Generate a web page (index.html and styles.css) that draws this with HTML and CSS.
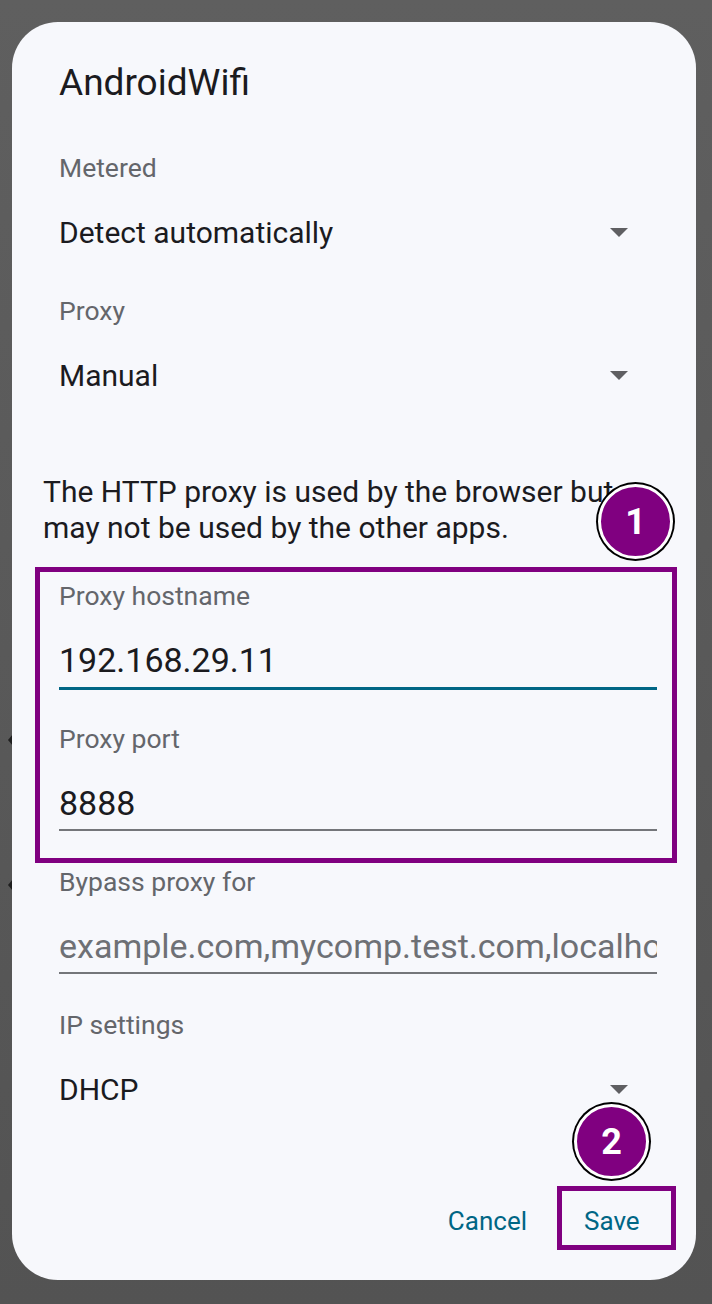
FILE: index.html
```html
<!DOCTYPE html>
<html>
<head>
<meta charset="utf-8">
<link rel="stylesheet" href="styles.css">
</head>
<body>
<div class="screen">
  <span class="peek peek-a"></span>
  <span class="peek peek-b"></span>
  <div class="dialog">
    <div class="title">AndroidWifi</div>

    <div class="label metered">Metered</div>
    <div class="select"><span>Detect automatically</span><span class="arrow"></span></div>

    <div class="label gap-l">Proxy</div>
    <div class="select"><span>Manual</span><span class="arrow"></span></div>

    <p class="note">The HTTP proxy is used by the browser but<br>may not be used by the other apps.</p>

    <div class="highlight">
      <div class="label first">Proxy hostname</div>
      <div class="field focused">192.168.29.11</div>
      <div class="label port">Proxy port</div>
      <div class="field">8888</div>
    </div>

    <div class="label bypass">Bypass proxy for</div>
    <div class="field hint">example.com,mycomp.test.com,localhost</div>

    <div class="label ip">IP settings</div>
    <div class="select"><span>DHCP</span><span class="arrow"></span></div>

    <div class="actions">
      <span class="btn">Cancel</span>
      <span class="btn save">Save</span>
    </div>

    <span class="badge badge-1">1</span>
    <span class="badge badge-2">2</span>
  </div>
</div>
</body>
</html>
```

FILE: styles.css
```css
* { box-sizing: border-box; }
html, body {
  margin: 0;
  padding: 0;
}
body {
  background: #5b5b5b;
  font-family: Roboto, "Noto Sans", sans-serif;
  width: 712px;
  height: 1304px;
  overflow: hidden;
}
.screen {
  position: relative;
  padding: 22px 16px 0 12px;
  height: 1304px;
  background: linear-gradient(#5f5f5f, #535353);
}
.peek {
  position: absolute;
  left: 8px;
  width: 0;
  height: 0;
  border-top: 6px solid transparent;
  border-bottom: 6px solid transparent;
  border-right: 5px solid #1e1e1e;
}
.peek-a { top: 734px; }
.peek-b { top: 879px; }

.dialog {
  position: relative;
  width: 684px;
  height: 1258px;
  background: #f7f8fc;
  border-radius: 46px;
  padding: 41px 39px 0 47px;
}
.title {
  font-size: 37px;
  line-height: 40px;
  height: 40px;
  color: #1b1b1f;
}
.label {
  font-size: 26.5px;
  line-height: 30px;
  height: 30px;
  color: #64666b;
}
.metered { margin-top: 50px; }
.gap-l { margin-top: 44px; }
.select {
  margin-top: 29px;
  height: 40px;
  display: flex;
  align-items: center;
  justify-content: space-between;
  font-size: 30px;
  color: #1b1b1f;
}
.arrow {
  width: 0;
  height: 0;
  margin-right: 29px;
  border-left: 9px solid transparent;
  border-right: 9px solid transparent;
  border-top: 9px solid #5f5f62;
}
.note {
  margin: 79px 0 0 -16px;
  font-size: 30px;
  line-height: 36px;
  color: #1b1b1f;
  white-space: nowrap;
}
.highlight {
  margin: 21px -20px 0 -24px;
  border: 5px solid #800080;
  padding: 9px 15px 27px 19px;
}
.field {
  margin-top: 29px;
  height: 48px;
  line-height: 40px;
  padding-bottom: 6px;
  border-bottom: 2px solid #74767a;
  font-size: 34px;
  color: #1b1b1f;
  white-space: nowrap;
  overflow: hidden;
}
.field.focused {
  height: 50px;
  padding-bottom: 7px;
  border-bottom: 3px solid #006685;
}
.label.port { margin-top: 34px; }
.highlight .field { margin-top: 29px; }
.bypass { margin-top: 4px; }
.field.hint {
  color: #6e7075;
  font-size: 34px;
}
.ip { margin-top: 36px; }

.actions {
  margin: 77px -19px 0 0;
  display: flex;
  justify-content: flex-end;
  align-items: center;
}
.btn {
  font-size: 26px;
  color: #006685;
  height: 64px;
  line-height: 54px;
  padding-top: 3px;
  border: 5px solid transparent;
}
.btn.save {
  margin-left: 25px;
  width: 119px;
  padding-left: 22px;
  border-color: #800080;
}
.badge {
  position: absolute;
  border-radius: 50%;
  background: #800080;
  border: 3px solid #fff;
  box-shadow: 0 0 0 2px #000;
  color: #fff;
  font-weight: 700;
  font-size: 36px;
  display: flex;
  align-items: center;
  justify-content: center;
  width: 75px;
  height: 75px;
}
.badge-1 { left: 586px; top: 462px; }
.badge-2 { left: 562px; top: 1082px; }
```
